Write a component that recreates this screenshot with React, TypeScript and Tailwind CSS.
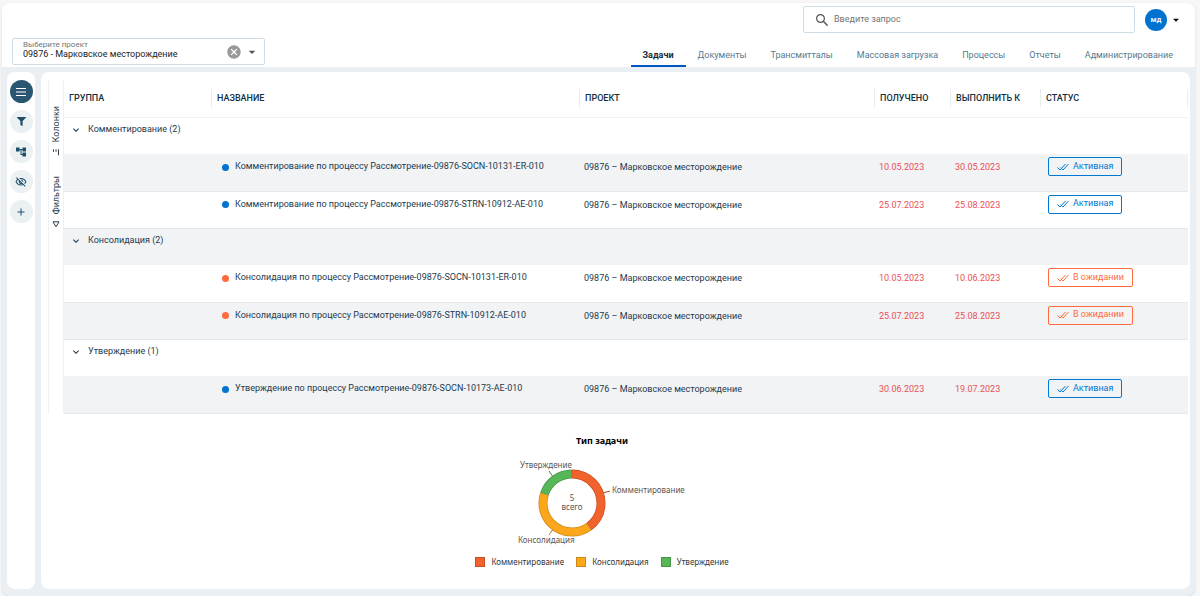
import { useState } from 'react';
import { FaFilter } from 'react-icons/fa';
import { MdAccountTree, MdAdd, MdArrowDropDown, MdCancel, MdExpandMore, MdOutlineVisibilityOff } from 'react-icons/md';

const tabs = ['Задачи', 'Документы', 'Трансмитталы', 'Массовая загрузка', 'Процессы', 'Отчеты', 'Администрирование'];

const PROJECT = '09876 – Марковское месторождение';

type Status = 'active' | 'waiting';

type Task = {
  name: string;
  received: string;
  due: string;
  status: Status;
};

const groups: { title: string; tasks: Task[] }[] = [
  {
    title: 'Комментирование',
    tasks: [
      { name: 'Комментирование по процессу Рассмотрение-09876-SOCN-10131-ER-010', received: '10.05.2023', due: '30.05.2023', status: 'active' },
      { name: 'Комментирование по процессу Рассмотрение-09876-STRN-10912-AE-010', received: '25.07.2023', due: '25.08.2023', status: 'active' }
    ]
  },
  {
    title: 'Консолидация',
    tasks: [
      { name: 'Консолидация по процессу Рассмотрение-09876-SOCN-10131-ER-010', received: '10.05.2023', due: '10.06.2023', status: 'waiting' },
      { name: 'Консолидация по процессу Рассмотрение-09876-STRN-10912-AE-010', received: '25.07.2023', due: '25.08.2023', status: 'waiting' }
    ]
  },
  {
    title: 'Утверждение',
    tasks: [
      { name: 'Утверждение по процессу Рассмотрение-09876-SOCN-10173-AE-010', received: '30.06.2023', due: '19.07.2023', status: 'active' }
    ]
  }
];

const columns = [
  { title: 'Группа', width: 'w-[147px]' },
  { title: 'Название', width: '' },
  { title: 'Проект', width: 'w-[295px]' },
  { title: 'Получено', width: 'w-[76px]' },
  { title: 'Выполнить к', width: 'w-[90px]' },
  { title: 'Статус', width: 'w-[148px]' }
];

const tools = [
  {
    label: 'Меню',
    icon: (
      <svg className="h-2 w-2.5" viewBox="0 0 10 8" stroke="currentColor">
        <path d="M0 .5h10M0 4h10M0 7.500h10" />
      </svg>
    )
  },
  { label: 'Фильтр', icon: <FaFilter className="size-[9px]" /> },
  { label: 'Структура', icon: <MdAccountTree className="size-3" /> },
  { label: 'Скрыть', icon: <MdOutlineVisibilityOff className="size-3" /> },
  { label: 'Добавить', icon: <MdAdd className="size-3" /> }
];

function Header() {
  const [tab, setTab] = useState('Задачи');
  const [query, setQuery] = useState('');

  return (
    <header className="bg-white pt-[3px]">
      <div className="flex items-center justify-end gap-2.5 pr-3">
        <label className="flex h-[27px] w-[332px] items-center gap-1.5 rounded-xs border border-[#cfdce4] px-3">
          <svg className="size-3" viewBox="0 0 12 12" fill="none" stroke="#555" strokeWidth="1.2">
            <circle cx="4.500" cy="4.500" r="3.900" />
            <path d="M7.300 7.300 11.600 11.600" strokeWidth="1.500" />
          </svg>
          <input
            type="search"
            aria-label="Поиск"
            placeholder="Введите запрос"
            value={query}
            onChange={(e) => setQuery(e.target.value)}
            className="min-w-0 flex-1 text-[9px] text-[#333] placeholder-[#757575] outline-none"
          />
        </label>
        <button aria-label="Профиль" className="flex items-center gap-0.5">
          <span className="flex size-[22px] items-center justify-center rounded-full bg-[#0073d1] text-[8px] font-medium text-white">мд</span>
          <MdArrowDropDown className="size-3.5 text-black" />
        </button>
      </div>

      <div className="flex items-end justify-between px-2.5">
        <div className="mt-[5px] mb-0.5 flex h-[27px] w-[253px] items-center rounded-xs border border-[#cfdce4] pr-1 pl-2.5">
          <div className="flex min-w-0 flex-1 flex-col pb-1">
            <label htmlFor="project" className="text-[8px] leading-[9px] text-[#757575]">Выберите проект</label>
            <select id="project" className="appearance-none text-[9px] leading-[10px] text-[#222] outline-none">
              <option>09876 - Марковское месторождение</option>
            </select>
          </div>
          <button aria-label="Очистить">
            <MdCancel className="size-4 text-[#999]" />
          </button>
          <MdArrowDropDown className="ml-0.5 size-4 text-[#555]" />
        </div>
        <nav className="flex">
          {tabs.map((name) => (
            <button
              key={name}
              onClick={() => setTab(name)}
              className={`h-[23px] border-b-2 px-3 text-[9px] leading-4 ${
                tab === name ? 'border-[#0057c2] font-bold text-[#0f2a3c]' : 'border-transparent text-[#547a91]'
              }`}
            >
              {name}
            </button>
          ))}
        </nav>
      </div>
    </header>
  );
}

function StatusButton({ status }: { status: Status }) {
  const active = status === 'active';
  return (
    <button
      className={`flex h-[19px] items-center gap-1 rounded-xs border px-2 text-[9px] ${
        active ? 'border-[#0078d4] text-[#0078d4]' : 'border-[#ff6b3d] text-[#ff6b3d]'
      }`}
    >
      <svg className="h-2 w-3" viewBox="0 0 12 8" fill="none" stroke="currentColor">
        <path d="M.5 4.5 3 7l5.500-6M3.500 4.500 6 7l5.500-6" />
      </svg>
      {active ? 'Активная' : 'В ожидании'}
    </button>
  );
}

function TaskTable() {
  const [closed, setClosed] = useState<string[]>([]);

  const toggle = (title: string) => {
    setClosed(closed.includes(title) ? closed.filter((c) => c !== title) : [...closed, title]);
  };

  return (
    <table className="w-full table-fixed border-collapse text-left text-[9px] text-[#1d3a4d]">
      <thead>
        <tr className="h-[37px] border-b border-[#edf1f4]">
          {columns.map((col, i) => (
            <th key={col.title} className={`p-0 font-medium text-[#12303f] uppercase ${col.width}`}>
              <div className={`flex h-[18px] items-center border-[#e6edf1] pl-[5px] ${i > 0 ? 'border-l' : ''} ${i === 5 ? 'border-r' : ''}`}>{col.title}</div>
            </th>
          ))}
        </tr>
      </thead>
      {groups.map((group) => (
        <tbody key={group.title}>
          <tr className={`h-[37px] align-top ${group.title === 'Консолидация' ? 'bg-[#f1f3f5]' : ''}`}>
            <td colSpan={6} className="p-0">
              <button onClick={() => toggle(group.title)} className="flex h-6 items-center gap-1.5 pl-1.5">
                <MdExpandMore className="size-3" />
                {group.title} ({group.tasks.length})
              </button>
            </td>
          </tr>
          {!closed.includes(group.title) &&
            group.tasks.map((task, i) => (
              <tr
                key={task.name}
                className={`h-[37px] border-b border-[#e4e9ed] align-top ${
                  i === (group.title === 'Консолидация' ? 1 : 0) ? 'bg-[#f1f3f5]' : ''
                }`}
              >
                <td />
                <td className="p-0 pl-[11px]">
                  <div className="flex h-[26px] items-center gap-1.5 whitespace-nowrap">
                    <span className={`size-[7px] rounded-full ${task.status === 'active' ? 'bg-[#0073d1]' : 'bg-[#ff6b3d]'}`} />
                    {task.name}
                  </div>
                </td>
                <td className="p-0 pl-[5px] leading-[26px]">{PROJECT}</td>
                <td className="p-0 pl-[5px] leading-[26px] text-[#ea4f55]">{task.received}</td>
                <td className="p-0 pl-[5px] leading-[26px] text-[#ea4f55]">{task.due}</td>
                <td className="p-0 pt-[3px] pl-2">
                  <StatusButton status={task.status} />
                </td>
              </tr>
            ))}
        </tbody>
      ))}
    </table>
  );
}

function TypeChart() {
  return (
    <figure className="flex flex-col items-center pt-5 pr-8 font-['Noto_Sans',sans-serif] text-[8px] text-[#333]">
      <figcaption className="text-[9px] leading-[14px] font-bold text-black">Тип задачи</figcaption>
      <svg width="240" height="100" viewBox="0 0 240 100" fontSize="8" fill="#555">
        {/* r=29 ring, circumference 182.2, shares 2/5, 2/5, 1/5 */}
        <g transform="rotate(-90 90 55)" fill="none" strokeWidth="9">
          <circle cx="90" cy="55" r="29" stroke="#c94f22" strokeDasharray="72.9 109.3" />
          <circle cx="90" cy="55" r="29" stroke="#cf8814" strokeDasharray="72.9 109.3" strokeDashoffset="-72.9" />
          <circle cx="90" cy="55" r="29" stroke="#469546" strokeDasharray="36.4 145.8" strokeDashoffset="-145.8" />
        </g>
        <g transform="rotate(-90 90 55)" fill="none" strokeWidth="7.5">
          <circle cx="90" cy="55" r="29" stroke="#f2622c" strokeDasharray="71.9 110.3" strokeDashoffset="-.5" />
          <circle cx="90" cy="55" r="29" stroke="#fba61b" strokeDasharray="71.9 110.3" strokeDashoffset="-73.4" />
          <circle cx="90" cy="55" r="29" stroke="#57b657" strokeDasharray="35.4 146.8" strokeDashoffset="-146.3" />
        </g>
        <path d="M121.4 44.8 128 43" stroke="#b8431a" />
        <path d="M70.6 81.7 67 87" stroke="#bd7c12" />
        <path d="M70.6 28.3 67 23" stroke="#3c8a3c" />
        <text x="38" y="20">Утверждение</text>
        <text x="130" y="45">Комментирование</text>
        <text x="36" y="95">Консолидация</text>
        <text x="90" y="53" textAnchor="middle">5</text>
        <text x="90" y="62" textAnchor="middle">всего</text>
      </svg>
      <ul className="mt-2 flex gap-3">
        <li className="flex items-center gap-1.5"><span className="size-2.5 border border-[#c94f22] bg-[#f2622c]" />Комментирование</li>
        <li className="flex items-center gap-1.5"><span className="size-2.5 border border-[#cf8814] bg-[#fba61b]" />Консолидация</li>
        <li className="flex items-center gap-1.5"><span className="size-2.5 border border-[#469546] bg-[#57b657]" />Утверждение</li>
      </ul>
    </figure>
  );
}

export default function App() {
  return (
    <div className="min-h-screen bg-[#f7f7f7] pt-[3px] pr-[5px] pl-0.5 font-['Roboto',sans-serif]">
      <div className="flex min-h-[calc(100vh-3px)] flex-col overflow-hidden rounded-lg bg-[#e9eff3] shadow">
        <Header />
        <div className="flex flex-1 gap-1.5 px-[5px] pt-[5px] pb-[7px]">
          <aside className="flex w-7 flex-col items-center gap-[7px] rounded-lg bg-white pt-2">
            {tools.map((tool, i) => (
              <button
                key={tool.label}
                aria-label={tool.label}
                className={`flex size-[23px] items-center justify-center rounded-full ${i === 0 ? 'bg-[#2b5671] text-white' : 'bg-[#ebf0f3] text-[#1f4e6b]'}`}
              >
                {tool.icon}
              </button>
            ))}
          </aside>
          <main className="min-w-0 flex-1 rounded-lg bg-white pt-2 pr-0.5 pl-[7px]">
            <div className="flex">
              <div className="flex w-4 flex-col items-center gap-5 border-x border-[#edf1f4] pt-[26px] text-[9px] text-[#2c3e4c]">
                <button className="flex rotate-180 items-center gap-1.5 leading-[10px] [writing-mode:vertical-rl]">
                  <svg className="size-2" viewBox="0 0 8 8" fill="none" stroke="currentColor">
                    <path d="M1.5 1v6M4 4.500v2.500M6.500 4.500v2.500" />
                  </svg>
                  Колонки
                </button>
                <button className="flex rotate-180 items-center gap-1.5 leading-[10px] [writing-mode:vertical-rl]">
                  <svg className="size-2" viewBox="0 0 8 8" fill="none" stroke="currentColor">
                    <path d="M1 6.5h6L4 1.500z" />
                  </svg>
                  Фильтры
                </button>
              </div>
              <div className="min-w-0 flex-1">
                <TaskTable />
              </div>
            </div>
            <TypeChart />
          </main>
        </div>
      </div>
    </div>
  );
}
